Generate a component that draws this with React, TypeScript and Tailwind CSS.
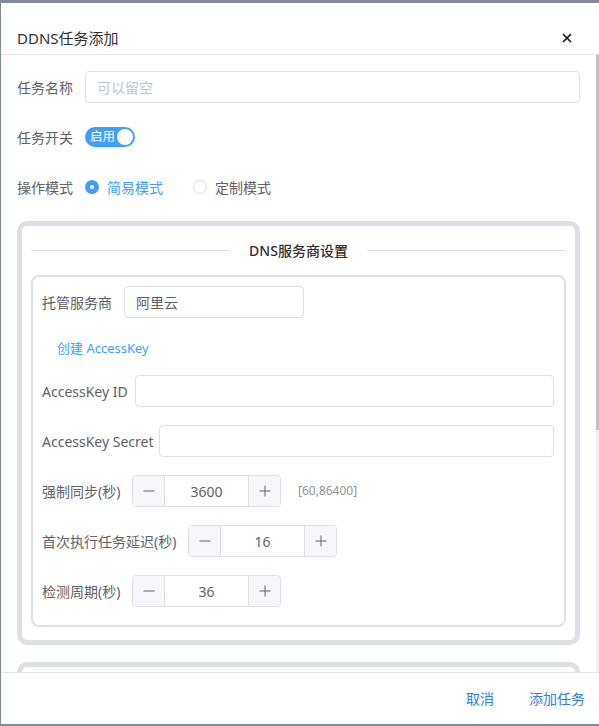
import { X } from 'lucide-react'

const font = "font-['Noto_Sans','Noto_Sans_CJK_SC',sans-serif]"

function Minus() {
  return (
    <svg width="12" height="12" viewBox="0 0 12 12">
      <path d="M0.5 6h11" stroke="#606266" strokeWidth="1" />
    </svg>
  )
}

function Plus() {
  return (
    <svg width="12" height="12" viewBox="0 0 12 12">
      <path d="M0.5 6h11M6 0.5v11" stroke="#606266" strokeWidth="1" />
    </svg>
  )
}

function NumberBox({ value }: { value: string }) {
  return (
    <div className="flex h-8 w-[149px] shrink-0 overflow-hidden rounded-[4px] border border-[#dcdfe6]">
      <div className="flex w-8 items-center justify-center border-r border-[#dcdfe6] bg-[#f5f7fa]">
        <Minus />
      </div>
      <div className="flex flex-1 items-center justify-center text-[14px] text-[#606266]">{value}</div>
      <div className="flex w-8 items-center justify-center border-l border-[#dcdfe6] bg-[#f5f7fa]">
        <Plus />
      </div>
    </div>
  )
}

function Row({ label, width, children }: { label: string; width: string; children: React.ReactNode }) {
  return (
    <div className="mb-[18px] flex h-8 items-center">
      <span className={`${width} shrink-0 whitespace-nowrap text-[14px] text-[#606266]`}>{label}</span>
      {children}
    </div>
  )
}

export default function App() {
  return (
    <div className={`h-[726px] w-[599px] overflow-hidden bg-[#838b95] pb-[2px] pl-[1px] pt-[3px] ${font}`}>
      <div className="flex h-full flex-col bg-white">
        {/* Header */}
        <div className="flex h-[52px] shrink-0 items-center justify-between border-b border-[#e4e4e4] pl-4 pr-[25px] pt-[19px]">
          <span className="text-[15px] text-[#303133]">DDNS任务添加</span>
          <X size={14} strokeWidth={3} className="text-[#1a1a1a]" />
        </div>

        {/* Body */}
        <div className="relative flex-1 overflow-hidden pl-4 pr-[19px] pt-4">
          <Row label="任务名称" width="w-[68px]">
            <div className="flex h-8 flex-1 items-center rounded-[4px] border border-[#dcdfe6] px-[11px] text-[14px] text-[#c0c4cc]">
              可以留空
            </div>
          </Row>

          <Row label="任务开关" width="w-[68px]">
            <div className="relative flex h-5 w-[50px] items-center rounded-full bg-[#409eff] pl-[5px]">
              <span className="text-[12.5px] leading-none text-white">启用</span>
              <span className="absolute right-[2px] top-[2px] h-4 w-4 rounded-full bg-white" />
            </div>
          </Row>

          <Row label="操作模式" width="w-[68px]">
            <div className="flex items-center">
              <span className="flex h-[14px] w-[14px] items-center justify-center rounded-full bg-[#409eff]">
                <span className="h-1 w-1 rounded-full bg-white" />
              </span>
              <span className="ml-2 text-[14px] text-[#409eff]">简易模式</span>
              <span className="ml-[30px] h-[14px] w-[14px] rounded-full border border-[#dcdfe6] bg-white" />
              <span className="ml-2 text-[14px] text-[#606266]">定制模式</span>
            </div>
          </Row>

          {/* DNS provider card */}
          <div className="mb-[17px] rounded-[10px] border-[5px] border-[#dcdfe6] px-[9px] pb-[13px]">
            <div className="mt-[14px] flex h-5 items-center">
              <div className="h-px flex-1 bg-[#dcdfe6]" />
              <span className="px-[19px] text-[14px] font-medium text-[#303133]">DNS服务商设置</span>
              <div className="h-px flex-1 bg-[#dcdfe6]" />
            </div>

            <div className="mt-[15px] rounded-[8px] border-2 border-[#dcdfe6] pl-[9px] pr-[10px] pt-[9px]">
              <Row label="托管服务商" width="w-[82px]">
                <div className="flex h-8 w-[180px] items-center rounded-[4px] border border-[#dcdfe6] px-[11px] text-[14px] text-[#606266]">
                  阿里云
                </div>
              </Row>

              <div className="mb-[15px] flex h-[24px] items-center pl-[15px] pt-[2px] text-[13px] text-[#409eff]">
                创建 AccessKey
              </div>

              <Row label="AccessKey ID" width="w-[93px]">
                <div className="h-8 flex-1 rounded-[4px] border border-[#dcdfe6]" />
              </Row>

              <Row label="AccessKey Secret" width="w-[117px]">
                <div className="h-8 flex-1 rounded-[4px] border border-[#dcdfe6]" />
              </Row>

              <Row label="强制同步(秒)" width="w-[90px]">
                <NumberBox value="3600" />
                <span className="ml-[17px] text-[12px] text-[#909399]">[60,86400]</span>
              </Row>

              <Row label="首次执行任务延迟(秒)" width="w-[146px]">
                <NumberBox value="16" />
              </Row>

              <Row label="检测周期(秒)" width="w-[90px]">
                <NumberBox value="36" />
              </Row>
            </div>
          </div>

          {/* next card (cut off) */}
          <div className="h-[60px] rounded-t-[10px] border-x-[5px] border-t-[5px] border-[#dcdfe6]" />

          {/* scrollbar */}
          <div className="absolute bottom-0 right-0 top-0 w-[3px] bg-[#f1f1f1]">
            <div className="h-[375px] w-full bg-[#c1c1c1]" />
          </div>
        </div>

        {/* Footer */}
        <div className="flex h-[52px] shrink-0 items-center justify-end gap-[35px] border-t border-[#e4e4e4] pr-[14px]">
          <span className="text-[14px] text-[#2e82d8]">取消</span>
          <span className="text-[14px] text-[#2e82d8]">添加任务</span>
        </div>
      </div>
    </div>
  )
}
